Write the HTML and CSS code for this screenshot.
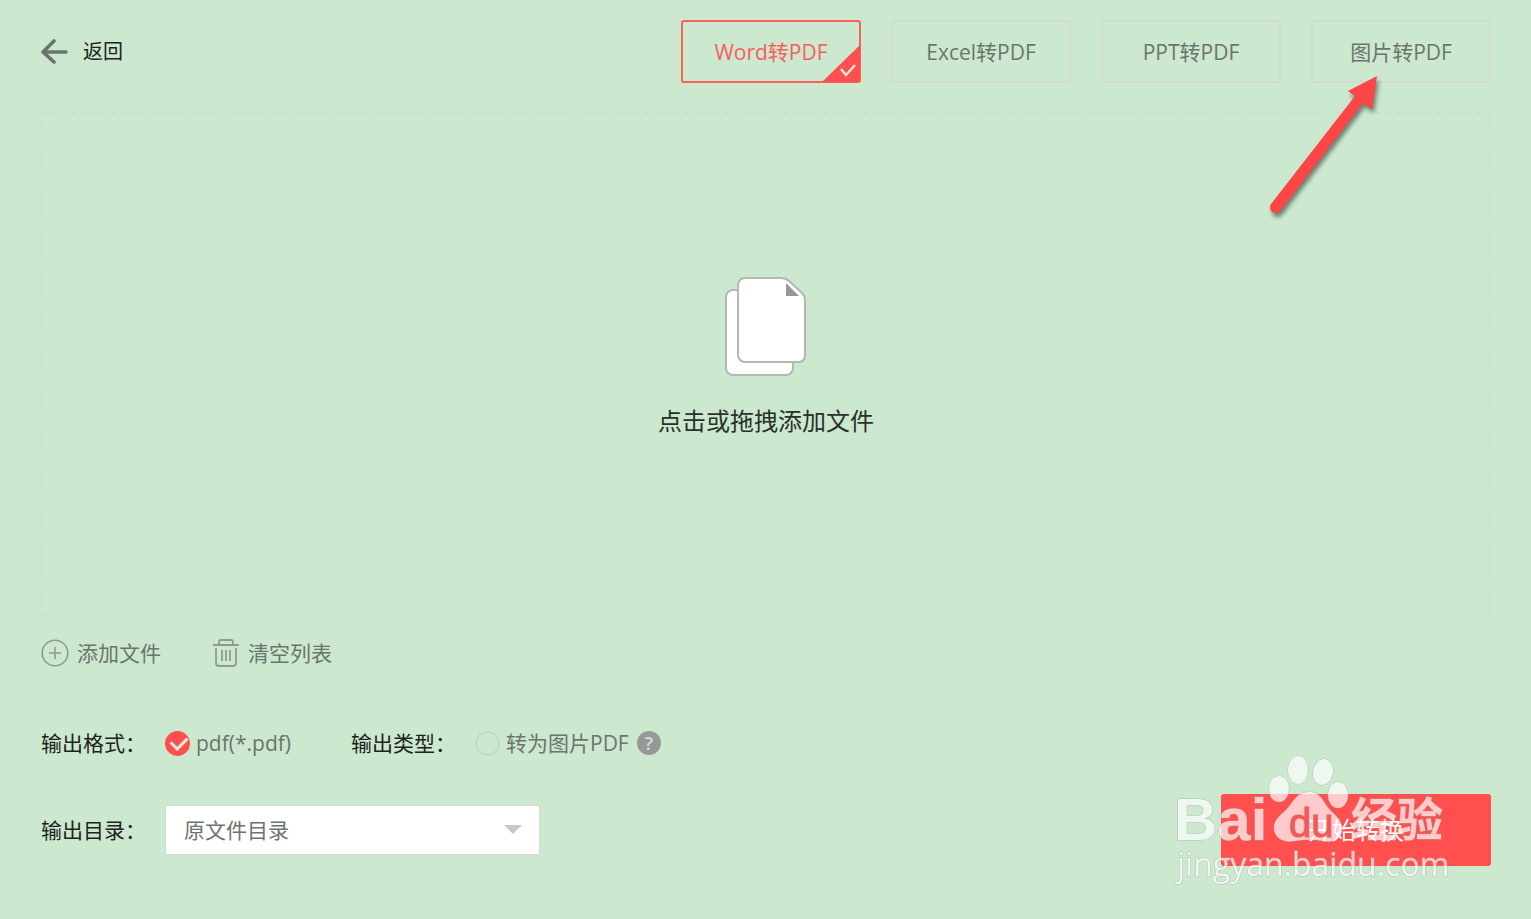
FILE: index.html
```html
<!DOCTYPE html>
<html lang="zh-CN">
<head>
    <meta charset="UTF-8">
    <meta name="viewport" content="width=device-width, initial-scale=1.0">
    <title>Word转PDF</title>
    <link rel="stylesheet" href="styles.css">
</head>
<body>
    <header class="header">
        <button class="back-btn" type="button">
            <svg class="back-icon" width="28" height="28" viewBox="0 0 28 28" fill="none" stroke="#6b736c" stroke-width="3.6" stroke-linecap="round" stroke-linejoin="round">
                <path d="M25 14H2M13 3L2 14l11 10"/>
            </svg>
            返回
        </button>
        <nav class="tabs">
            <button class="tab active" type="button">
                Word转PDF
                <svg class="tab-check" width="38" height="37" viewBox="0 0 38 37">
                    <path d="M38 0V37H0z" fill="#ff4f4f"/>
                    <path d="M19 24l5 6 9-10" fill="none" stroke="#dcead9" stroke-width="2.4"/>
                </svg>
            </button>
            <button class="tab" type="button">Excel转PDF</button>
            <button class="tab" type="button">PPT转PDF</button>
            <button class="tab" type="button">图片转PDF</button>
        </nav>
        <svg class="pointer" width="120" height="150" viewBox="0 0 120 150">
            <path d="M117 6L88 21l7 5L11 134c-4 8 6 12 10 6L103 33l9 6z" fill="#fc4545"/>
        </svg>
    </header>

    <main class="main">
        <button class="dropzone" type="button">
            <svg width="82" height="100" viewBox="0 0 82 100" fill="#fff" stroke="#b3b8b3" stroke-width="2">
                <rect x="1" y="13" width="67" height="85" rx="7"/>
                <path d="M20 1h36q5 0 8 3l13 12q3 3 3 7v56a6 6 0 0 1-6 6H20a7 7 0 0 1-7-7V8a7 7 0 0 1 7-7z"/>
                <path d="M61 6v13h13z" fill="#969696" stroke="none"/>
            </svg>
            <span class="drop-text">点击或拖拽添加文件</span>
        </button>

        <div class="actions">
            <button class="action" type="button">
                <svg width="28" height="28" viewBox="0 0 28 28" fill="none" stroke="#8f9b91" stroke-width="1.6">
                    <circle cx="14" cy="14" r="12.8"/>
                    <path d="M8 14h12M14 8v12"/>
                </svg>
                添加文件
            </button>
            <button class="action" type="button">
                <svg width="28" height="28" viewBox="0 0 28 28" fill="none" stroke="#8f9b91" stroke-width="1.8">
                    <path d="M1 6h26M7 6V3q0-2 2-2h10q2 0 2 2v3M4 9v15q0 3 3 3h14q3 0 3-3V9M10 11v11M14 11v11M18 11v11"/>
                </svg>
                清空列表
            </button>
        </div>

        <div class="options">
            <div class="option">
                <span class="label">输出格式：</span>
                <label class="choice">
                    <input type="radio" name="format" checked>
                    pdf(*.pdf)
                </label>
            </div>
            <div class="option">
                <span class="label">输出类型：</span>
                <label class="choice">
                    <input type="checkbox" name="as-image">
                    转为图片PDF
                </label>
                <button class="help" type="button">?</button>
            </div>
        </div>
    </main>

    <footer class="footer">
        <label class="label" for="output-dir">输出目录：</label>
        <div class="select-wrap">
            <select id="output-dir">
                <option>原文件目录</option>
            </select>
        </div>
        <button class="start-btn" type="button">开始转换</button>

        <svg class="watermark" width="290" height="140" viewBox="0 0 290 140">
            <g class="mark">
                <text class="mark-latin" x="3" y="90">Bai</text>
                <ellipse cx="108" cy="39" rx="10" ry="13"/>
                <ellipse cx="127" cy="20" rx="10" ry="14"/>
                <ellipse cx="152" cy="22" rx="10" ry="13" transform="rotate(12 152 22)"/>
                <ellipse cx="167" cy="45" rx="10" ry="13"/>
                <path d="M138 42c12 0 14 10 20 17 6 6 13 11 13 20 0 10-9 14-18 12-10-2-20-2-30 0-10 2-20-3-20-13 0-9 7-13 13-19 7-8 10-17 22-17z"/>
                <text class="mark-cjk" x="180" y="86">经验</text>
                <text class="mark-url" x="6" y="126">jingyan.baidu.com</text>
            </g>
            <text class="mark-du" x="118" y="87">du</text>
        </svg>
    </footer>
</body>
</html>
```
FILE: styles.css
```css
* {
    margin: 0;
    padding: 0;
    box-sizing: border-box;
}

body {
    font-family: 'Open Sans', 'Noto Sans CJK SC', sans-serif;
    font-size: 21px;
    line-height: 30px;
    color: #6b756d;
    background: #cce8cf;
    min-height: 100vh;
    display: flex;
    flex-direction: column;
    padding: 20px 40px 53px 41px;
}

button,
select {
    font: inherit;
    color: inherit;
    background: none;
    border: none;
    cursor: pointer;
}

svg {
    flex-shrink: 0;
}

.header {
    position: relative;
    display: flex;
    justify-content: space-between;
    align-items: center;
    margin-bottom: 29px;
}

.back-btn {
    display: flex;
    align-items: center;
    gap: 14px;
    color: #1d241e;
    font-size: 20px;
}

.tabs {
    display: flex;
    gap: 30px;
}

.tab {
    position: relative;
    width: 180px;
    height: 63px;
    border: 2px solid #d3dad1;
    border-radius: 3px;
}

.tab.active {
    color: #f85f5b;
    border-color: #f8605c;
}

.tab-check {
    position: absolute;
    right: -1px;
    bottom: -1px;
}

/* arrow that points at the last tab */
.pointer {
    position: absolute;
    z-index: 1;
    top: 50px;
    right: 111px;
    pointer-events: none;
    filter: drop-shadow(2px 4px 2px rgba(0, 0, 0, 0.45));
}

.main {
    flex: 1;
    display: flex;
    flex-direction: column;
}

.dropzone {
    flex: 1;
    display: flex;
    flex-direction: column;
    align-items: center;
    justify-content: center;
    gap: 26px;
    min-height: 300px;
    padding-bottom: 14px;
    border: 2px dashed #d2ddd0;
}

.drop-text {
    font-size: 24px;
    line-height: 36px;
    color: #2a302b;
}

.actions {
    display: flex;
    gap: 51px;
    margin-top: 21px;
}

.action {
    display: flex;
    align-items: center;
    gap: 8px;
}

.options {
    display: flex;
    gap: 60px;
    margin: 60px 0 36px;
}

.option {
    display: flex;
    align-items: center;
}

.label {
    width: 124px;
    color: #1d241e;
}

.choice {
    display: flex;
    align-items: center;
    gap: 6px;
    cursor: pointer;
}

.choice input {
    appearance: none;
    position: relative;
    width: 25px;
    height: 25px;
    border: 2px solid #c8d6c8;
    border-radius: 50%;
}

.choice input:checked {
    background: #ff4f4f;
    border-color: #ff4f4f;
}

.choice input:checked::after {
    content: '';
    position: absolute;
    left: 4px;
    top: 3px;
    width: 13px;
    height: 8px;
    border-left: 3px solid #e3ebdf;
    border-bottom: 3px solid #e3ebdf;
    transform: rotate(-45deg);
}

.help {
    width: 24px;
    height: 24px;
    margin-left: 8px;
    border-radius: 50%;
    background: #989898;
    color: #cce8cf;
    font-size: 18px;
    font-weight: 600;
    line-height: 24px;
}

.footer {
    position: relative;
    display: flex;
    align-items: center;
}

.select-wrap {
    position: relative;
    width: 375px;
}

.select-wrap::after {
    content: '';
    position: absolute;
    right: 18px;
    top: 20px;
    border: 9px solid transparent;
    border-top-color: #c8c8c8;
    border-bottom: none;
    pointer-events: none;
}

.select-wrap select {
    appearance: none;
    display: block;
    width: 100%;
    height: 50px;
    padding: 0 18px;
    background: #fff;
    border: 1px solid #d3dad1;
}

.start-btn {
    width: 270px;
    height: 72px;
    margin-left: auto;
    border-radius: 3px;
    background: #ff4f4f;
    color: #fff;
    font-size: 24px;
}

.watermark {
    position: absolute;
    right: 30px;
    bottom: -24px;
    pointer-events: none;
}

.mark {
    fill: #fff;
    stroke: #9fb0a2;
    stroke-width: 1px;
    paint-order: stroke;
    opacity: 0.7;
}

.mark-latin {
    font-family: 'Liberation Sans', sans-serif;
    font-size: 60px;
    font-weight: 700;
}

.mark-cjk {
    font-size: 46px;
    font-weight: 700;
}

.mark-url {
    font-size: 32px;
}

.mark-du {
    font-family: 'Liberation Sans', sans-serif;
    font-size: 40px;
    fill: #f05a5a;
    stroke: #f05a5a;
    stroke-width: 1px;
}
```
